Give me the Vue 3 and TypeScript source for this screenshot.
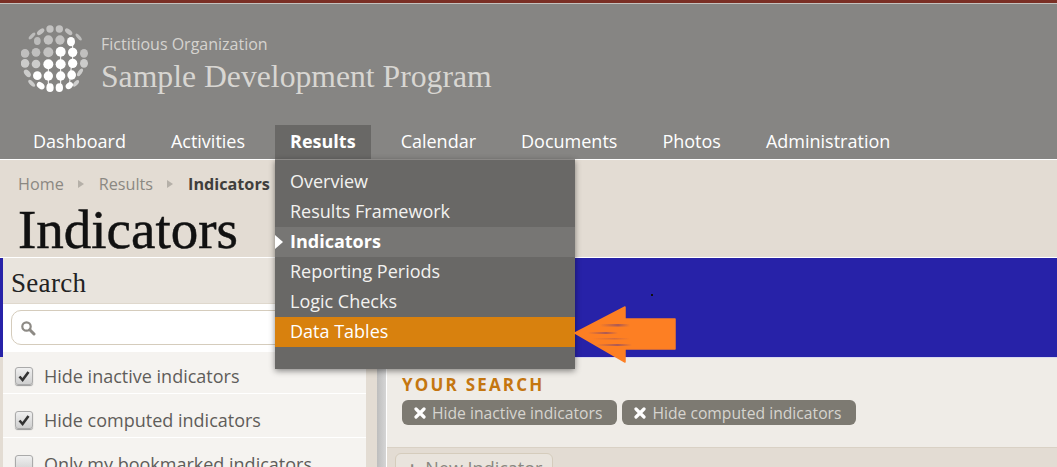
<script setup lang="ts">
const nav = ['Dashboard', 'Activities', 'Results', 'Calendar', 'Documents', 'Photos', 'Administration']
const menu = ['Overview', 'Results Framework', 'Indicators', 'Reporting Periods', 'Logic Checks', 'Data Tables']
const checks = [
  { label: 'Hide inactive indicators', on: true },
  { label: 'Hide computed indicators', on: true },
  { label: 'Only my bookmarked indicators', on: false },
]
const chips = ['Hide inactive indicators', 'Hide computed indicators']

// x, y, rx, ry, rotation, opacity: globe dots, three units to a pixel
type Dot = [number, number, number, number, number, number]
const globe: Dot[] = [
  [120, 42, 11, 11, 0, 0.5], [148, 42, 11, 11, 0, 0.5],
  [92, 50, 13, 7, -40, 0.5], [176, 50, 13, 7, 40, 0.5],
  [66, 63, 13, 5, -45, 0.45], [206, 66, 13, 5, 50, 0.45],
  [82, 78, 10, 12, 0, 0.45], [115, 75, 14, 14, 0, 0.5], [150, 75, 14, 14, 0, 0.5], [183, 80, 12, 14, 0, 1],
  [45, 115, 13, 13, 0, 0.48], [78, 112, 13, 13, 0, 0.48], [115, 112, 15, 15, 0, 0.5],
  [152, 110, 15, 15, 0, 1], [188, 112, 14, 14, 0, 1], [222, 115, 12, 13, 0, 0.48],
  [45, 145, 13, 13, 0, 0.58], [78, 147, 13, 13, 0, 0.58], [115, 148, 15, 15, 0, 1],
  [152, 148, 15, 15, 0, 1], [188, 145, 14, 14, 0, 1], [222, 145, 12, 13, 0, 0.58],
  [52, 175, 13, 8, 50, 0.58], [82, 182, 13, 13, 0, 1], [115, 183, 14, 14, 0, 1],
  [152, 183, 14, 14, 0, 1], [185, 180, 13, 14, 0, 1], [210, 172, 13, 6, -55, 0.58],
  [65, 205, 13, 6, 45, 0.58], [92, 212, 13, 9, 40, 1], [120, 218, 11, 13, 0, 1],
  [148, 218, 11, 13, 0, 1], [178, 212, 12, 9, -40, 1], [198, 205, 12, 6, -50, 0.6],
]
// thin white links between the bright dots of a column
const links: string[] = ['M152 110V218', 'M188 80V145', 'M185 145 178 212', 'M115 148V218']
</script>

<template>
  <div class="page">
    <header class="header">
      <div class="brand">
        <svg class="logo" width="70" height="70" viewBox="33 30 210 210">
          <path v-for="l in links" :key="l" :d="l" stroke="#fff" stroke-width="3" fill="none" />
          <ellipse
            v-for="(d, i) in globe"
            :key="i"
            :cx="d[0]"
            :cy="d[1]"
            :rx="d[2]"
            :ry="d[3]"
            :transform="`rotate(${d[4]} ${d[0]} ${d[1]})`"
            fill="#fff"
            :fill-opacity="d[5]"
          />
        </svg>
        <div class="brand-text">
          <div class="org">Fictitious Organization</div>
          <div class="program">Sample Development Program</div>
        </div>
      </div>
      <nav class="nav">
        <a v-for="n in nav" :key="n" class="nav-item" :class="{ active: n === 'Results' }">{{ n }}</a>
      </nav>
    </header>

    <div class="content">
      <div class="crumbs">
        <span>Home</span><i class="tri"></i><span>Results</span><i class="tri"></i><b>Indicators</b>
      </div>
      <h1 class="title">Indicators</h1>

      <div class="columns">
        <aside class="side">
          <div class="side-head">Search</div>
          <div class="side-input">
            <div class="input">
              <svg width="16" height="16" viewBox="0 0 16 16">
                <circle cx="6.5" cy="6.5" r="4.2" fill="none" stroke="#8d8a85" stroke-width="2.2" />
                <path d="M9.8 9.8 14 14" stroke="#8d8a85" stroke-width="3" stroke-linecap="round" />
              </svg>
            </div>
          </div>
          <label v-for="c in checks" :key="c.label" class="check">
            <span class="box">
              <svg v-if="c.on" width="14" height="14" viewBox="0 0 14 14">
                <path d="M2.5 7.5 5.6 11 11.5 3" fill="none" stroke="#333" stroke-width="2.6" />
              </svg>
            </span>
            {{ c.label }}
          </label>
        </aside>

        <div class="gutter"><div class="strip"></div></div>

        <main class="main">
          <div class="banner"><span class="speck"></span></div>
          <div class="summary">
            <div class="your">YOUR SEARCH</div>
            <div class="chips">
              <span v-for="c in chips" :key="c" class="chip">
                <svg width="12" height="12" viewBox="0 0 12 12">
                  <path d="M2 2 10 10M10 2 2 10" stroke="#fff" stroke-width="3.2" stroke-linecap="round" />
                </svg>
                {{ c }}
              </span>
            </div>
          </div>
          <div class="toolbar">
            <span class="btn"><span class="plus">+</span>New Indicator</span>
          </div>
        </main>
      </div>
    </div>

    <div class="menu">
      <div
        v-for="m in menu"
        :key="m"
        class="menu-item"
        :class="{ current: m === 'Indicators', hot: m === 'Data Tables' }"
      >{{ m }}</div>
    </div>

    <svg class="arrow" width="102" height="58" viewBox="0 0 102 58">
      <defs>
        <linearGradient id="streak" x1="0" x2="1" y1="0" y2="0">
          <stop offset="0" stop-color="#8a4a6a" stop-opacity="0" />
          <stop offset=".6" stop-color="#8a4a6a" stop-opacity=".7" />
          <stop offset="1" stop-color="#8a4a6a" stop-opacity="0" />
        </linearGradient>
      </defs>
      <path d="M1 27 51 1V13H101V43H51V56Z" fill="#fd7f23" stroke="#fd7f23" stroke-width="1.5" stroke-linejoin="round" />
      <rect x="26" y="18" width="30" height="2.5" fill="url(#streak)" />
      <rect x="14" y="26" width="30" height="2" fill="url(#streak)" />
      <rect x="18" y="32" width="38" height="1.5" fill="url(#streak)" opacity=".5" />
      <rect x="22" y="38" width="36" height="2" fill="url(#streak)" />
    </svg>
  </div>
</template>

<style>
html, body { margin: 0; overflow: hidden; background: #e3dcd3; }
</style>

<style scoped>
.page {
  position: relative;
  width: 1057px;
  height: 467px;
  overflow: hidden;
  font-family: "Open Sans", sans-serif;
  background: #e3dcd3;
  border-top: 3px solid #7a2f25;
  box-sizing: border-box;
}
.header {
  height: 157px;
  background: #868583;
  border-top: 1px solid #c4c2bf;
  border-bottom: 1px solid #fff;
  box-sizing: border-box;
  display: flex;
  flex-direction: column;
  justify-content: space-between;
}
.brand { display: flex; align-items: flex-start; padding: 21px 0 0 21px; gap: 10px; }
.logo { flex: none; }
.brand-text { padding-top: 9px; }
.org { font-size: 16px; line-height: 20px; color: #d5d3cf; }
.program {
  margin-top: 3px;
  font-family: "Liberation Serif", serif;
  font-size: 31.7px;
  line-height: 40px;
  color: #d8d6d2;
}
.nav { display: flex; padding-left: 18px; gap: 15px; height: 34px; }
.nav-item { color: #fff; font-size: 18px; line-height: 32px; padding: 0 15px; }
.nav-item.active { background: #696866; font-weight: 700; }
.content { display: flex; flex-direction: column; }
.crumbs {
  display: flex;
  align-items: center;
  padding: 13px 0 0 18px;
  height: 22px;
  font-size: 16.2px;
  line-height: 22px;
  color: #8b8882;
}
.crumbs b { color: #403e3c; }
.tri {
  width: 0; height: 0; margin: 0 15px 0 14px;
  border-left: 6px solid #b5b0a8;
  border-top: 4px solid transparent;
  border-bottom: 4px solid transparent;
}
.title {
  margin: 0;
  padding: 10px 0 0 18px;
  font-family: "Liberation Serif", serif;
  font-weight: 400;
  font-size: 55px;
  line-height: 50px;
  color: #111;
  -webkit-text-stroke: 0.5px #111;
}
.columns { display: flex; margin-top: 2px; border-top: 1px solid #fff; }
.side {
  width: 363px;
  flex: none;
  border-left: 3px solid transparent;
  background: linear-gradient(#2722a8, #2722a8) left top / 3px 99px no-repeat border-box;
}
.side-head {
  height: 46px;
  box-sizing: border-box;
  background: #e9e4dd;
  font-family: "Liberation Serif", serif;
  font-size: 27px;
  letter-spacing: 0.3px;
  line-height: 50px;
  padding-left: 8px;
  color: #222;
  border-bottom: 1px solid #dfd8cd;
}
.side-input { background: #fff; padding: 6px 8px 7px; height: 48px; box-sizing: border-box; }
.input {
  height: 35px;
  border: 1px solid #d5ccbc;
  border-radius: 10px;
  background: #fff;
  display: flex;
  align-items: center;
  padding-left: 8px;
  box-sizing: border-box;
  width: 500px;
}
.check {
  display: flex;
  align-items: center;
  gap: 11px;
  height: 44px;
  padding: 9px 0 0 12px;
  background: #f5f3f0;
  border-bottom: 1px solid #fff;
  box-sizing: border-box;
  font-size: 18px;
  color: #5f5d5a;
}
.check:first-of-type { height: 42px; padding-top: 7px; }
.box {
  width: 18px;
  height: 18px;
  flex: none;
  border: 1px solid #aaa;
  border-radius: 3px;
  background: linear-gradient(#f0f0f0, #cfcfcf);
  box-shadow: 0 1px 1px #999;
  display: flex;
  align-items: center;
  justify-content: center;
  box-sizing: border-box;
}
.gutter { width: 21px; flex: none; display: flex; justify-content: flex-end; }
.strip { width: 10px; background: linear-gradient(90deg, #bdbdbd, #d8d8d8); }
.main { flex: 1; display: flex; flex-direction: column; border-left: 1px solid #fff; margin-left: -1px; }
.banner { height: 100px; background: #2722a8; border-bottom: 1px solid #d9d9ee; box-sizing: border-box; position: relative; }
.speck { position: absolute; left: 264px; top: 36px; width: 2px; height: 2px; background: #111; }
.summary { background: #efece7; height: 89px; padding: 17px 0 0 15px; box-sizing: border-box; }
.your { color: #c47610; font-weight: 700; font-size: 17px; line-height: 20px; letter-spacing: 2.2px; }
.chips { display: flex; gap: 5px; margin-top: 5px; }
.chip {
  background: #7d7a72;
  color: #d6d4cf;
  font-size: 15.7px;
  height: 25px;
  border-radius: 6px;
  display: flex;
  align-items: center;
  gap: 6px;
  padding: 0 15px 0 12px;
}
.toolbar { padding: 5px 0 0 8px; background: #e3dcd3; border-top: 1px solid #d9d1c5; }
.btn {
  display: inline-block;
  border: 1px solid #d5ccbc;
  border-radius: 6px;
  padding: 0 10px 0 11px;
  height: 30px;
  line-height: 28px;
  font-size: 18px;
  color: #8a8780;
  background: #e9e4dd;
}
.plus { font-weight: 700; margin-right: 8px; }
.menu {
  position: absolute;
  left: 275px;
  top: 156px;
  width: 300px;
  padding-top: 7px;
  background: #696866;
  box-shadow: 0 2px 6px rgba(0, 0, 0, .45);
  border-top: 1px solid #8a8886;
  box-sizing: border-box;
  height: 210px;
}
.menu-item { height: 30px; line-height: 29px; padding-left: 15px; color: #f3f2f0; font-size: 18px; position: relative; }
.menu-item.current { background: #777674; font-weight: 700; color: #fff; }
.menu-item.current::before {
  content: "";
  position: absolute;
  left: 0;
  top: 8px;
  border-left: 8px solid #fff;
  border-top: 7px solid transparent;
  border-bottom: 7px solid transparent;
}
.menu-item.hot { background: #d8810e; color: #fff; }
.arrow { position: absolute; left: 574px; top: 303px; }
</style>
